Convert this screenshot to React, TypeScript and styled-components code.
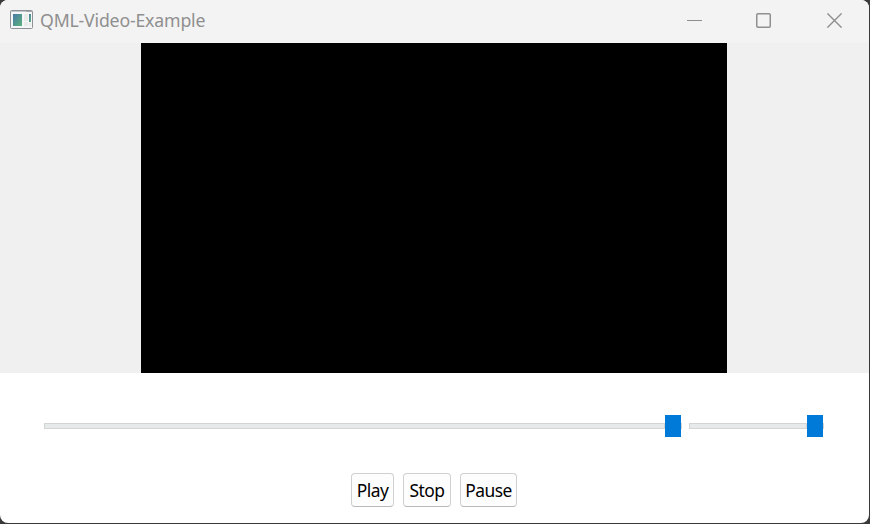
import React from 'react';
import styled, { createGlobalStyle } from 'styled-components';

const GlobalStyle = createGlobalStyle`
  * { box-sizing: border-box; }
  body { margin: 0; background: #393939; overflow: hidden; }
`;

const Window = styled.main`
  width: 869px;
  height: 523px;
  display: flex;
  flex-direction: column;
  background: #fff;
  border-radius: 8px;
  overflow: hidden;
  font-family: 'Noto Sans', 'Open Sans', sans-serif;
`;

const TitleBar = styled.header`
  flex: 0 0 43px;
  display: flex;
  align-items: flex-start;
  padding-left: 10px;
  background: #f3f3f3;
`;

const AppIcon = styled.svg`
  flex: none;
  margin-top: 9px;
`;

const Title = styled.h1`
  flex: 1;
  margin: 0 0 0 7px;
  font-size: 17.7px;
  font-weight: 400;
  line-height: 41px;
  letter-spacing: -0.18px;
  color: #8f8f8f;
  white-space: nowrap;
`;

const CaptionButton = styled.button<{ $width: number }>`
  width: ${(p) => p.$width}px;
  height: 41px;
  padding: 0;
  border: 0;
  background: none;
  display: flex;
  align-items: center;
  justify-content: center;
  color: #8f8f8f;
`;

const Stage = styled.section`
  flex: 0 0 330px;
  display: flex;
  padding-left: 141px;
  background: #f0f0f0;
`;

const Video = styled.div`
  width: 586px;
  background: #000;
`;

const Sliders = styled.div`
  display: flex;
  gap: 7px;
  padding: 42px 0 0 44px;
`;

const Slider = styled.div<{ $width: number }>`
  width: ${(p) => p.$width}px;
  height: 22px;
  display: flex;
  align-items: center;
`;

const Track = styled.div`
  flex: 1;
  height: 6px;
  border: 1px solid #d3d5d4;
  background: #e7eaea;
`;

const Handle = styled.div`
  width: 16px;
  height: 22px;
  background: #007ad9;
`;

const TrackEnd = styled.div`
  width: 1px;
  height: 6px;
  background: #d3d5d4;
`;

const Buttons = styled.div`
  display: flex;
  gap: 9px;
  padding: 36px 0 0 351px;
`;

const PlayerButton = styled.button<{ $width: number }>`
  width: ${(p) => p.$width}px;
  height: 34px;
  padding: 0;
  border: 1px solid #d0d0d0;
  border-bottom-color: #b9b9b9;
  border-radius: 4px;
  background: #fdfdfd;
  color: #000;
  font: 400 17.4px/30px 'Noto Sans', 'Open Sans', sans-serif;
  letter-spacing: -0.5px;
  white-space: nowrap;
  text-align: center;
`;

const RangeSlider = ({ width }: { width: number }) => (
  <Slider $width={width}>
    <Track />
    <Handle />
    <TrackEnd />
  </Slider>
);

export default function App() {
  return (
    <>
      <GlobalStyle />
      <Window>
        <TitleBar>
          <AppIcon width="23" height="21" viewBox="0 0 23 21">
            <defs>
              <linearGradient id="pane" x1="0" y1="0" x2="1" y2="1">
                <stop offset="0" stopColor="#4979a8" />
                <stop offset="1" stopColor="#5cb37c" />
              </linearGradient>
            </defs>
            <rect x="0.5" y="1.5" width="22" height="18" rx="1" fill="#f5f6f8" stroke="#8e9296" />
            <path d="M1 2.5h21" stroke="#c3c7cb" />
            <path d="M16 2.5h6" stroke="#a2a7ae" />
            <rect x="3" y="5" width="9" height="12" fill="url(#pane)" />
            <rect x="14" y="5" width="4" height="7" fill="#e9ebe9" />
            <rect x="14" y="13" width="4" height="4" fill="#e9ebe9" />
            <rect x="19" y="5" width="2" height="8" fill="url(#pane)" />
            <rect x="19" y="14" width="2" height="3" fill="#e9ebe9" />
          </AppIcon>
          <Title>QML-Video-Example</Title>
          <CaptionButton $width={65} aria-label="Minimize">
            <svg width="15" height="15" fill="none" stroke="currentColor">
              <path d="M0 7.5h15" />
            </svg>
          </CaptionButton>
          <CaptionButton $width={73} aria-label="Maximize">
            <svg width="15" height="15" fill="none" stroke="currentColor">
              <rect x="0.75" y="0.75" width="13.5" height="13.5" rx="1.2" strokeWidth="1.5" />
            </svg>
          </CaptionButton>
          <CaptionButton $width={69} aria-label="Close">
            <svg width="15" height="15" fill="none" stroke="currentColor">
              <path d="M.4.4l14.2 14.2M14.6.4L.4 14.6" strokeWidth="1.4" />
            </svg>
          </CaptionButton>
        </TitleBar>
        <Stage>
          <Video />
        </Stage>
        <Sliders>
          <RangeSlider width={638} />
          <RangeSlider width={135} />
        </Sliders>
        <Buttons>
          <PlayerButton $width={43}>Play</PlayerButton>
          <PlayerButton $width={48}>Stop</PlayerButton>
          <PlayerButton $width={57}>Pause</PlayerButton>
        </Buttons>
      </Window>
    </>
  );
}
